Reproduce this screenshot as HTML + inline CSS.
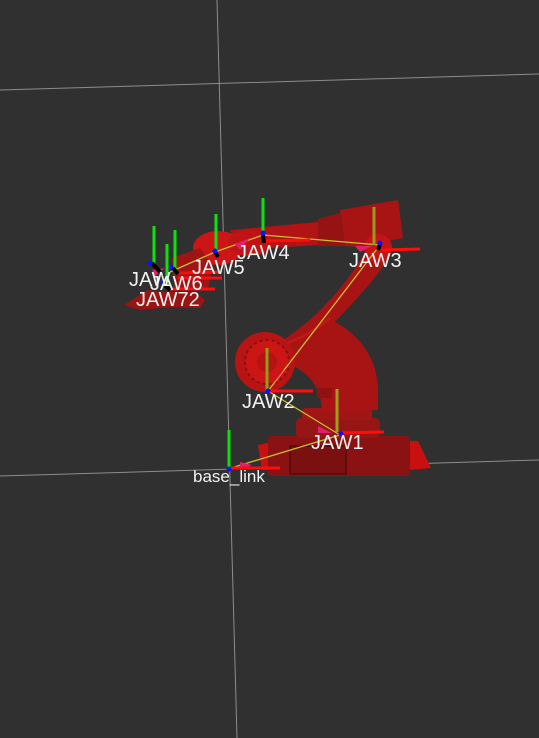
<!DOCTYPE html>
<html><head><meta charset="utf-8"><style>
html,body{margin:0;padding:0;background:#303030;width:539px;height:738px;overflow:hidden}
svg{display:block}
text{font-family:"Liberation Sans",sans-serif;fill:#f2f2f2}
</style></head><body>
<svg width="539" height="738" viewBox="0 0 539 738" xmlns="http://www.w3.org/2000/svg">
<rect width="539" height="738" fill="#303030"/>
<g stroke="#8c8c8c" stroke-width="1" fill="none">
<line x1="0" y1="90" x2="539" y2="74"/>
<line x1="0" y1="476" x2="539" y2="460"/>
<line x1="217" y1="0" x2="237" y2="738"/>
</g>
<!-- base -->
<g>
<polygon points="258,445 272,442 278,470 262,470" fill="#c81010"/>
<polygon points="404,441 418,441 431,468 410,470" fill="#c81010"/>
<rect x="268" y="436" width="142" height="40" rx="3" fill="#8a1212"/>
<rect x="290" y="446" width="56" height="28" fill="#7a1010" stroke="#3a0808" stroke-width="1"/>
<rect x="296" y="418" width="84" height="20" rx="5" fill="#961515"/>
<rect x="302" y="408" width="70" height="12" rx="4" fill="#a01616"/>
</g>
<!-- lower arm curved band -->
<path d="M372,240 L392,252 C380,275 355,300 335,322 C360,335 378,360 378,390 L378,410 L322,412 C322,390 310,372 290,365 L270,350 C290,335 310,322 325,305 C345,285 360,262 372,240 Z" fill="#a81414"/>
<path d="M280,345 C300,340 315,330 330,318" stroke="#c01818" stroke-width="3" fill="none"/>
<circle cx="265" cy="362" r="30" fill="#b81414"/>
<circle cx="267" cy="362" r="22" fill="#cc1515" stroke="#8a0e0e" stroke-width="2" stroke-dasharray="3 3"/>
<circle cx="267" cy="362" r="10" fill="#b51212"/>
<rect x="317" y="388" width="15" height="10" fill="#8e1212"/>
<!-- upper arm -->
<polygon points="230,230 318,222 318,245 240,250" fill="#b01414"/>
<polygon points="318,219 340,213 345,246 318,246" fill="#961313"/>
<polygon points="340,210 398,200 403,238 360,247 345,246" fill="#a81414"/>
<circle cx="378" cy="248" r="14" fill="#c41414"/>
<!-- wrist -->
<ellipse cx="218" cy="248" rx="25" ry="17" fill="#cc1515"/>
<ellipse cx="250" cy="243" rx="22" ry="13" fill="#c01414"/>
<polygon points="172,258 200,248 212,265 208,290 175,290" fill="#a01414"/>
<!-- gripper -->
<polygon points="124,305 148,290 168,292 195,292 205,300 200,308 170,307 140,310" fill="#9a1414"/>
<!-- links -->
<g stroke="#c8c030" stroke-width="1.3" fill="none">
<line x1="231" y1="468" x2="340" y2="435"/>
<line x1="340" y1="435" x2="268" y2="391"/>
<line x1="268" y1="391" x2="380" y2="245"/>
<line x1="380" y1="245" x2="263" y2="235"/>
<line x1="263" y1="235" x2="215" y2="252"/>
<line x1="215" y1="252" x2="170" y2="272"/>
</g>
<g fill="#e0206a">
<polygon points="240,462 252,465 240,470"/>
<polygon points="318,426 332,433 318,433"/>
<polygon points="278,376 286,368 272,385"/>
<polygon points="355,246 372,246 360,252"/>
<polygon points="235,244 250,238 240,250"/>
<polygon points="152,270 165,268 155,276"/>
</g>
<g stroke-width="3">
<line x1="229" y1="430" x2="229" y2="467" stroke="#10e010"/>
<line x1="231" y1="468" x2="280" y2="468" stroke="#ff0c0c"/>
<line x1="337" y1="389" x2="337" y2="432" stroke="#a0a018"/>
<line x1="340" y1="433" x2="384" y2="432" stroke="#ff0c0c"/>
<line x1="267" y1="348" x2="267" y2="390" stroke="#8ca018"/>
<line x1="270" y1="391" x2="313" y2="391" stroke="#ff0c0c"/>
<line x1="374" y1="207" x2="374" y2="245" stroke="#9a9a18"/>
<line x1="382" y1="250" x2="420" y2="249" stroke="#ff0c0c"/>
<line x1="263" y1="198" x2="263" y2="232" stroke="#10e010"/>
<line x1="265" y1="241" x2="310" y2="240" stroke="#ff0c0c"/>
<line x1="216" y1="214" x2="216" y2="250" stroke="#10e010"/>
<line x1="178" y1="273" x2="222" y2="272" stroke="#ff0c0c"/>
<line x1="154" y1="226" x2="154" y2="266" stroke="#10e010"/>
<line x1="175" y1="230" x2="175" y2="270" stroke="#10e010"/>
<line x1="167" y1="244" x2="167" y2="285" stroke="#10e010"/>
<line x1="170" y1="289" x2="215" y2="289" stroke="#ff0c0c"/>
<line x1="178" y1="278" x2="222" y2="278" stroke="#ff0c0c"/>
</g>
<g stroke="#000" stroke-width="4">
<line x1="152" y1="263" x2="160" y2="272"/>
<line x1="173" y1="268" x2="178" y2="274"/>
<line x1="164" y1="284" x2="170" y2="290"/>
<line x1="214" y1="250" x2="218" y2="257"/>
<line x1="263" y1="235" x2="264" y2="243"/>
<line x1="380" y1="244" x2="378" y2="250"/>
</g>
<g fill="#1010ff">
<circle cx="229" cy="469" r="2.5"/><circle cx="341" cy="434" r="2.5"/><circle cx="268" cy="391" r="2.5"/>
<circle cx="380" cy="243" r="2.5"/><circle cx="263" cy="233" r="2.5"/><circle cx="215" cy="251" r="2.5"/>
<circle cx="150" cy="263" r="2.5"/><circle cx="171" cy="267" r="2.5"/><circle cx="163" cy="283" r="2.5"/>
</g>
<g font-size="20">
<text x="237" y="259">JAW4</text>
<text x="192" y="274">JAW5</text>
<text x="349" y="267">JAW3</text>
<text x="242" y="408">JAW2</text>
<text x="311" y="449">JAW1</text>
<text x="129" y="286">JAW</text>
<text x="150" y="290">JAW6</text>
<text x="136" y="306">JAW72</text>
</g>
<text x="193" y="482" font-size="17">base_link</text>
</svg>
</body></html>
